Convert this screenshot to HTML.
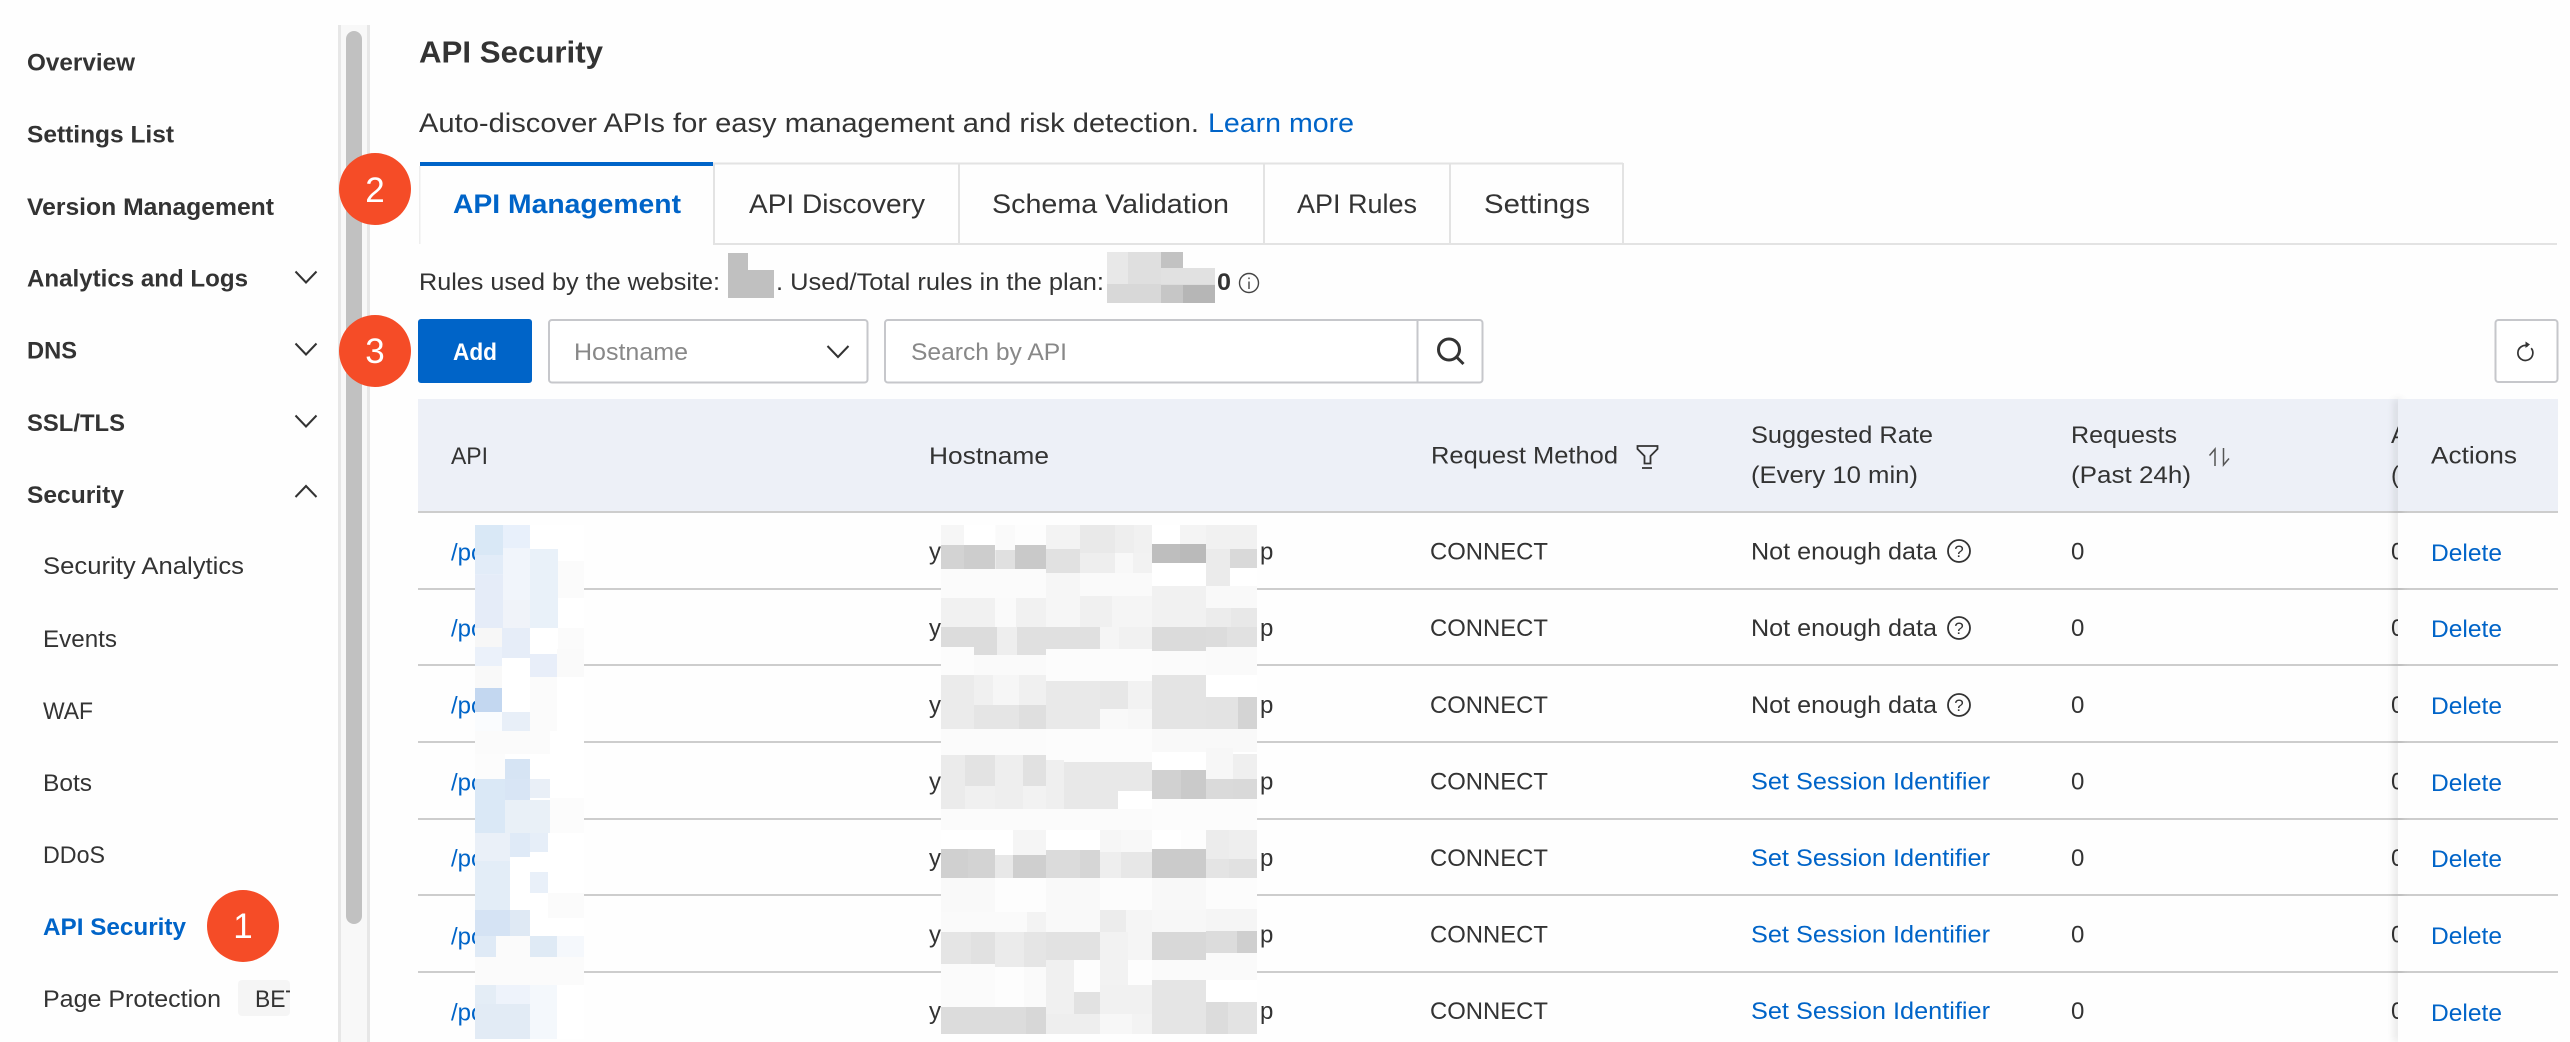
<!DOCTYPE html>
<html lang="en"><head><meta charset="utf-8"><title>API Security</title>
<style>
html,body{margin:0;padding:0;background:#fefefe;width:2570px;height:1042px;overflow:hidden}
svg{display:block}
text{font-family:"Liberation Sans",Arial,sans-serif;font-size:24px;fill:#333}
.b{font-weight:700}
.l{fill:#0064c8}
.g{fill:#888}
.t{font-size:27px}
.n{font-size:35px;fill:#fff;text-anchor:middle}
.s{fill:none;stroke:#333;stroke-width:2}
</style></head><body>
<svg xmlns="http://www.w3.org/2000/svg" width="2570" height="1042" viewBox="0 0 2570 1042">
<defs>
<clipPath id="cb"><rect x="238" y="980" width="52" height="36"/></clipPath>
<clipPath id="cc"><rect x="2380" y="390" width="18" height="652"/></clipPath>
<filter id="sh" x="-200%" y="-5%" width="500%" height="110%"><feGaussianBlur stdDeviation="4"/></filter>
</defs>
<rect width="2570" height="1042" fill="#fefefe"/>

<!-- sidebar -->
<text class="b" x="27" y="70.5" textLength="108" lengthAdjust="spacingAndGlyphs">Overview</text>
<text class="b" x="27" y="142.5" textLength="147" lengthAdjust="spacingAndGlyphs">Settings List</text>
<text class="b" x="27" y="215" textLength="247" lengthAdjust="spacingAndGlyphs">Version Management</text>
<text class="b" x="27" y="286.5" textLength="221" lengthAdjust="spacingAndGlyphs">Analytics and Logs</text>
<text class="b" x="27" y="358.5" textLength="50" lengthAdjust="spacingAndGlyphs">DNS</text>
<text class="b" x="27" y="431" textLength="98" lengthAdjust="spacingAndGlyphs">SSL/TLS</text>
<text class="b" x="27" y="503" textLength="97" lengthAdjust="spacingAndGlyphs">Security</text>
<path class="s" d="M295.5 271.5L306 282.5L316.5 271.5M295.5 343.5L306 354.5L316.5 343.5M295.5 415.5L306 426.5L316.5 415.5M295.5 497L306 486L316.5 497"/>
<text x="43" y="574" textLength="201" lengthAdjust="spacingAndGlyphs">Security Analytics</text>
<text x="43" y="647" textLength="74" lengthAdjust="spacingAndGlyphs">Events</text>
<text x="43" y="719" textLength="50" lengthAdjust="spacingAndGlyphs">WAF</text>
<text x="43" y="791" textLength="49" lengthAdjust="spacingAndGlyphs">Bots</text>
<text x="43" y="863" textLength="62" lengthAdjust="spacingAndGlyphs">DDoS</text>
<text class="b l" x="43" y="935" textLength="143" lengthAdjust="spacingAndGlyphs">API Security</text>
<text x="43" y="1007" textLength="178" lengthAdjust="spacingAndGlyphs">Page Protection</text>
<rect x="238" y="980" width="52" height="36" rx="4" fill="#f5f5f5"/>
<g clip-path="url(#cb)"><text x="255" y="1007" textLength="58" lengthAdjust="spacingAndGlyphs">BETA</text></g>

<!-- scrollbar -->
<rect x="338" y="25" width="32" height="1017" fill="#f8f8f8"/>
<rect x="338" y="25" width="3" height="1017" fill="#e7e7e7"/>
<rect x="367" y="25" width="3" height="1017" fill="#e7e7e7"/>
<rect x="346" y="31" width="16" height="893" rx="8" fill="#c1c1c1"/>

<!-- heading -->
<text class="b" style="font-size:31px" x="419" y="62.5" textLength="184" lengthAdjust="spacingAndGlyphs">API Security</text>
<text class="t" x="419" y="132" textLength="780" lengthAdjust="spacingAndGlyphs">Auto-discover APIs for easy management and risk detection.</text>
<text class="t l" x="1208" y="132" textLength="146" lengthAdjust="spacingAndGlyphs">Learn more</text>

<!-- tabs -->
<rect x="713" y="243" width="1844" height="2" fill="#e3e3e3"/>
<rect x="713" y="162.5" width="910" height="2" fill="#e3e3e3"/>
<rect x="419" y="166" width="1.5" height="78" fill="#eeeeee"/>
<rect x="713" y="163" width="2" height="82" fill="#e3e3e3"/>
<rect x="958" y="163" width="2" height="82" fill="#e3e3e3"/>
<rect x="1263" y="163" width="2" height="82" fill="#e3e3e3"/>
<rect x="1449" y="163" width="2" height="82" fill="#e3e3e3"/>
<rect x="1622" y="163" width="2" height="82" fill="#e3e3e3"/>
<rect x="420" y="162" width="293" height="4" fill="#0064c8"/>
<text class="t b l" x="453" y="213" textLength="228" lengthAdjust="spacingAndGlyphs">API Management</text>
<text class="t" x="749" y="213" textLength="176" lengthAdjust="spacingAndGlyphs">API Discovery</text>
<text class="t" x="992" y="213" textLength="237" lengthAdjust="spacingAndGlyphs">Schema Validation</text>
<text class="t" x="1297" y="213" textLength="120" lengthAdjust="spacingAndGlyphs">API Rules</text>
<text class="t" x="1484" y="213" textLength="106" lengthAdjust="spacingAndGlyphs">Settings</text>

<!-- rules line -->
<text x="419" y="290" textLength="301" lengthAdjust="spacingAndGlyphs">Rules used by the website:</text>
<path fill="#c0c0c0" d="M728 253h20v17h26v28h-46z"/>
<text x="776" y="290" textLength="328" lengthAdjust="spacingAndGlyphs">. Used/Total rules in the plan:</text>
<g>
<rect x="1107" y="268" width="108" height="35" fill="#dcdcdc"/>
<rect x="1107" y="252" width="21" height="32" fill="#e8e8e8"/>
<rect x="1128" y="252" width="33" height="32" fill="#dfdfdf"/>
<rect x="1161" y="252" width="22" height="16" fill="#c2c2c2"/>
<rect x="1183" y="252" width="32" height="16" fill="#fefefe"/>
<rect x="1161" y="268" width="54" height="16" fill="#e1e1e1"/>
<rect x="1161" y="285" width="22" height="18" fill="#c6c6c6"/>
<rect x="1183" y="285" width="32" height="18" fill="#b6b6b6"/>
<rect x="1107" y="284" width="54" height="19" fill="#d8d8d8"/>
</g>
<text class="b" x="1217" y="290" textLength="14" lengthAdjust="spacingAndGlyphs">0</text>
<circle cx="1249" cy="283" r="9.5" fill="none" stroke="#444" stroke-width="1.4"/>
<path d="M1249 281.5v7.5M1249 277.5v1.6" stroke="#444" stroke-width="1.4" fill="none"/>

<!-- toolbar -->
<rect x="418" y="319" width="114" height="64" rx="3" fill="#0064c8"/>
<text class="b" style="fill:#fff" x="453" y="360" textLength="44" lengthAdjust="spacingAndGlyphs">Add</text>
<rect x="549" y="320" width="318.5" height="62.5" rx="3" fill="#fff" stroke="#c6c7cb" stroke-width="2"/>
<text class="g" x="574" y="360" textLength="114" lengthAdjust="spacingAndGlyphs">Hostname</text>
<path class="s" d="M827.5 346L838 357L848.5 346"/>
<rect x="885" y="320" width="597.5" height="62.5" rx="3" fill="#fff" stroke="#c6c7cb" stroke-width="2"/>
<rect x="1416.5" y="320" width="2" height="62" fill="#c6c7cb"/>
<text class="g" x="911" y="360" textLength="156" lengthAdjust="spacingAndGlyphs">Search by API</text>
<circle cx="1449" cy="349.5" r="10.5" fill="none" stroke="#333" stroke-width="3"/>
<path d="M1456.5 357L1463.5 364" stroke="#333" stroke-width="3" fill="none"/>
<rect x="2495.5" y="320" width="62" height="62" rx="3" fill="#fff" stroke="#c6c7cb" stroke-width="2"/>
<path d="M2528 345.9A7.5 7.5 0 1 0 2531.2 348.2" fill="none" stroke="#333" stroke-width="1.7"/>
<path d="M2525.5 341.5L2530 344.5L2525.5 348Z" fill="#333"/>

<!-- table header -->
<rect x="418" y="399" width="2140" height="113" fill="#edf0f7"/>
<text x="451" y="464" textLength="37" lengthAdjust="spacingAndGlyphs">API</text>
<text x="929" y="464" textLength="120" lengthAdjust="spacingAndGlyphs">Hostname</text>
<text x="1431" y="463.5" textLength="187" lengthAdjust="spacingAndGlyphs">Request Method</text>
<path d="M1637.5 446H1657.5V449L1650.5 456V463.5H1644.5V456L1637.5 449ZM1642 468H1652" fill="none" stroke="#333" stroke-width="1.8"/>
<text x="1751" y="443" textLength="182" lengthAdjust="spacingAndGlyphs">Suggested Rate</text>
<text x="1751" y="483" textLength="167" lengthAdjust="spacingAndGlyphs">(Every 10 min)</text>
<text x="2071" y="443" textLength="106" lengthAdjust="spacingAndGlyphs">Requests</text>
<text x="2071" y="483" textLength="120" lengthAdjust="spacingAndGlyphs">(Past 24h)</text>
<path d="M2215 466V449L2209.5 455.5M2223.5 448V465L2229 458.5" fill="none" stroke="#555" stroke-width="1.5"/>

<!-- row lines -->
<g fill="#cdcdcd">
<rect x="418" y="511" width="2140" height="2"/>
<rect x="418" y="588" width="2140" height="2"/>
<rect x="418" y="664" width="2140" height="2"/>
<rect x="418" y="741" width="2140" height="2"/>
<rect x="418" y="818" width="2140" height="2"/>
<rect x="418" y="894" width="2140" height="2"/>
<rect x="418" y="971" width="2140" height="2"/>
</g>

<!-- rows: API -->
<text class="l" x="451" y="560.5">/po</text>
<text class="l" x="451" y="636.5">/po</text>
<text class="l" x="451" y="713.5">/po</text>
<text class="l" x="451" y="790.5">/po</text>
<text class="l" x="451" y="866.5">/po</text>
<text class="l" x="451" y="944.5">/po</text>
<text class="l" x="451" y="1020.5">/po</text>
<!-- rows: hostname -->
<text x="929" y="559.5">y</text><text x="1260" y="559.5">p</text>
<text x="929" y="636">y</text><text x="1260" y="636">p</text>
<text x="929" y="713">y</text><text x="1260" y="713">p</text>
<text x="929" y="789.5">y</text><text x="1260" y="789.5">p</text>
<text x="929" y="866">y</text><text x="1260" y="866">p</text>
<text x="929" y="942.5">y</text><text x="1260" y="942.5">p</text>
<text x="929" y="1019">y</text><text x="1260" y="1019">p</text>

<!-- API mosaic -->
<g transform="translate(470 520) scale(.33333)">
<rect x="15" y="15" width="327" height="1542" fill="#fff"/>
<rect x="15" y="15" width="84" height="90" fill="#d9e8f6"/>
<rect x="99" y="15" width="81" height="70" fill="#e8f0fb"/>
<rect x="15" y="105" width="84" height="58" fill="#e2ecf8"/>
<rect x="99" y="85" width="81" height="155" fill="#f1f5fb"/>
<rect x="180" y="87" width="84" height="237" fill="#e9f1f9"/>
<rect x="264" y="123" width="78" height="111" fill="#fbfbfb"/>
<rect x="15" y="163" width="84" height="161" fill="#e5ecf8"/>
<rect x="99" y="240" width="81" height="84" fill="#f0f3f9"/>
<rect x="15" y="324" width="81" height="57" fill="#f7f7f7"/>
<rect x="96" y="324" width="84" height="90" fill="#e6edf8"/>
<rect x="264" y="324" width="78" height="63" fill="#fbfbfb"/>
<rect x="15" y="381" width="81" height="57" fill="#ebf1fa"/>
<rect x="180" y="402" width="81" height="69" fill="#e8eef9"/>
<rect x="261" y="387" width="81" height="84" fill="#fafafa"/>
<rect x="15" y="438" width="81" height="66" fill="#f9f9f9"/>
<rect x="15" y="504" width="81" height="72" fill="#c3d7f0"/>
<rect x="180" y="471" width="81" height="162" fill="#fbfbfb"/>
<rect x="15" y="576" width="81" height="57" fill="#fafcfe"/>
<rect x="96" y="576" width="84" height="57" fill="#e8eff8"/>
<rect x="15" y="633" width="225" height="69" fill="#fbfbfb"/>
<rect x="15" y="702" width="90" height="75" fill="#fcfcfc"/>
<rect x="105" y="717" width="75" height="60" fill="#d6e4f4"/>
<rect x="15" y="777" width="90" height="162" fill="#dae8f6"/>
<rect x="105" y="777" width="75" height="63" fill="#d8e5f5"/>
<rect x="180" y="777" width="60" height="57" fill="#e9eff7"/>
<rect x="105" y="840" width="135" height="99" fill="#e9f0f7"/>
<rect x="240" y="834" width="102" height="105" fill="#fcfcfc"/>
<rect x="15" y="939" width="105" height="84" fill="#eaf0f8"/>
<rect x="120" y="939" width="60" height="72" fill="#dfeaf7"/>
<rect x="180" y="939" width="54" height="57" fill="#e6eef8"/>
<rect x="15" y="1023" width="105" height="147" fill="#e3edf7"/>
<rect x="180" y="1056" width="54" height="63" fill="#e9f0f9"/>
<rect x="234" y="1119" width="108" height="75" fill="#fbfbfb"/>
<rect x="15" y="1170" width="105" height="78" fill="#d5e3f4"/>
<rect x="120" y="1170" width="60" height="78" fill="#dfe9f4"/>
<rect x="15" y="1248" width="63" height="63" fill="#dfeaf6"/>
<rect x="78" y="1248" width="102" height="63" fill="#fbfbfb"/>
<rect x="180" y="1248" width="81" height="63" fill="#dfeaf5"/>
<rect x="261" y="1248" width="81" height="75" fill="#f5f8fc"/>
<rect x="15" y="1311" width="327" height="84" fill="#fbfbfb"/>
<rect x="15" y="1395" width="63" height="57" fill="#e4edf6"/>
<rect x="78" y="1395" width="102" height="57" fill="#eef3fb"/>
<rect x="180" y="1395" width="81" height="162" fill="#f4f8fc"/>
<rect x="15" y="1452" width="165" height="105" fill="#e2ebf5"/>
</g>

<!-- Hostname mosaic -->
<g transform="translate(935 520) scale(.33333)">
<rect x="18" y="15" width="948" height="1527" fill="#fff"/>
<rect x="18" y="15" width="69" height="60" fill="#f6f6f6"/>
<rect x="181" y="15" width="59" height="75" fill="#fafafa"/>
<rect x="240" y="15" width="93" height="60" fill="#fdfdfd"/>
<rect x="333" y="15" width="102" height="72" fill="#f3f3f3"/>
<rect x="435" y="15" width="105" height="84" fill="#e9e9e9"/>
<rect x="540" y="15" width="57" height="84" fill="#eeeeee"/>
<rect x="597" y="15" width="54" height="84" fill="#f1f1f1"/>
<rect x="735" y="15" width="78" height="57" fill="#f4f4f4"/>
<rect x="813" y="15" width="72" height="72" fill="#f1f1f1"/>
<rect x="885" y="15" width="81" height="72" fill="#f1f1f1"/>
<rect x="18" y="75" width="69" height="72" fill="#d3d3d3"/>
<rect x="87" y="75" width="93" height="72" fill="#cdcdcd"/>
<rect x="181" y="90" width="59" height="57" fill="#e0e0e0"/>
<rect x="240" y="75" width="93" height="72" fill="#c9c9c9"/>
<rect x="333" y="87" width="102" height="72" fill="#e1e1e1"/>
<rect x="435" y="99" width="105" height="60" fill="#eeeeee"/>
<rect x="540" y="99" width="54" height="60" fill="#f8f8f8"/>
<rect x="594" y="99" width="57" height="60" fill="#f2f2f2"/>
<rect x="651" y="72" width="84" height="57" fill="#bebebe"/>
<rect x="735" y="72" width="78" height="57" fill="#bababa"/>
<rect x="813" y="87" width="72" height="111" fill="#ebebeb"/>
<rect x="885" y="87" width="81" height="57" fill="#d9d9d9"/>
<rect x="18" y="147" width="315" height="87" fill="#fbfbfb"/>
<rect x="333" y="159" width="102" height="75" fill="#f6f6f6"/>
<rect x="435" y="159" width="216" height="69" fill="#fafafa"/>
<rect x="651" y="198" width="162" height="123" fill="#f1f1f1"/>
<rect x="813" y="198" width="153" height="66" fill="#f9f9f9"/>
<rect x="18" y="234" width="162" height="87" fill="#f1f1f1"/>
<rect x="180" y="234" width="63" height="87" fill="#fafafa"/>
<rect x="243" y="234" width="90" height="87" fill="#f1f1f1"/>
<rect x="333" y="234" width="102" height="87" fill="#f6f6f6"/>
<rect x="435" y="228" width="96" height="93" fill="#f0f0f0"/>
<rect x="531" y="228" width="120" height="93" fill="#f5f5f5"/>
<rect x="813" y="264" width="75" height="57" fill="#ececec"/>
<rect x="888" y="264" width="78" height="57" fill="#e8e8e8"/>
<rect x="18" y="321" width="168" height="60" fill="#dcdcdc"/>
<rect x="117" y="381" width="69" height="24" fill="#dcdcdc"/>
<rect x="186" y="321" width="60" height="84" fill="#eeeeee"/>
<rect x="246" y="321" width="249" height="66" fill="#e0e0e0"/>
<rect x="246" y="387" width="87" height="18" fill="#e0e0e0"/>
<rect x="495" y="321" width="57" height="72" fill="#f5f5f5"/>
<rect x="552" y="321" width="99" height="72" fill="#f1f1f1"/>
<rect x="651" y="321" width="162" height="72" fill="#dbdbdb"/>
<rect x="813" y="321" width="63" height="60" fill="#dcdcdc"/>
<rect x="876" y="321" width="90" height="60" fill="#e1e1e1"/>
<rect x="18" y="381" width="99" height="84" fill="#fcfcfc"/>
<rect x="117" y="405" width="216" height="60" fill="#fafafa"/>
<rect x="333" y="387" width="318" height="96" fill="#fcfcfc"/>
<rect x="651" y="393" width="162" height="72" fill="#fbfbfb"/>
<rect x="813" y="381" width="153" height="84" fill="#fafafa"/>
<rect x="18" y="465" width="99" height="162" fill="#ebebeb"/>
<rect x="117" y="465" width="57" height="90" fill="#f0f0f0"/>
<rect x="174" y="465" width="78" height="90" fill="#f6f6f6"/>
<rect x="252" y="465" width="81" height="90" fill="#f0f0f0"/>
<rect x="117" y="555" width="135" height="72" fill="#e5e5e5"/>
<rect x="252" y="555" width="81" height="72" fill="#dfdfdf"/>
<rect x="333" y="483" width="162" height="144" fill="#e9e9e9"/>
<rect x="495" y="483" width="84" height="84" fill="#e7e7e7"/>
<rect x="579" y="483" width="72" height="84" fill="#f2f2f2"/>
<rect x="495" y="567" width="84" height="60" fill="#f9f9f9"/>
<rect x="579" y="567" width="72" height="60" fill="#f7f7f7"/>
<rect x="651" y="465" width="162" height="162" fill="#e4e4e4"/>
<rect x="813" y="531" width="96" height="96" fill="#e3e3e3"/>
<rect x="909" y="531" width="57" height="96" fill="#d4d4d4"/>
<rect x="18" y="627" width="315" height="78" fill="#fbfbfb"/>
<rect x="333" y="627" width="318" height="99" fill="#fcfcfc"/>
<rect x="651" y="627" width="315" height="69" fill="#f9f9f9"/>
<rect x="813" y="684" width="81" height="93" fill="#f7f7f7"/>
<rect x="894" y="702" width="72" height="75" fill="#efefef"/>
<rect x="18" y="705" width="72" height="162" fill="#ebebeb"/>
<rect x="90" y="705" width="90" height="93" fill="#e3e3e3"/>
<rect x="90" y="798" width="90" height="69" fill="#f0f0f0"/>
<rect x="180" y="705" width="84" height="162" fill="#eeeeee"/>
<rect x="264" y="705" width="69" height="93" fill="#e1e1e1"/>
<rect x="264" y="798" width="69" height="69" fill="#f2f2f2"/>
<rect x="333" y="720" width="54" height="147" fill="#efefef"/>
<rect x="387" y="726" width="162" height="141" fill="#e8e8e8"/>
<rect x="549" y="726" width="102" height="87" fill="#e8e8e8"/>
<rect x="651" y="750" width="87" height="87" fill="#d1d1d1"/>
<rect x="738" y="750" width="75" height="87" fill="#cacaca"/>
<rect x="813" y="777" width="81" height="60" fill="#dadada"/>
<rect x="894" y="777" width="72" height="60" fill="#d9d9d9"/>
<rect x="18" y="867" width="633" height="63" fill="#fbfbfb"/>
<rect x="651" y="837" width="315" height="93" fill="#fcfcfc"/>
<rect x="234" y="930" width="99" height="75" fill="#f5f5f5"/>
<rect x="495" y="930" width="63" height="66" fill="#f6f6f6"/>
<rect x="558" y="930" width="93" height="66" fill="#f8f8f8"/>
<rect x="738" y="930" width="75" height="57" fill="#fdfdfd"/>
<rect x="813" y="930" width="69" height="87" fill="#ececec"/>
<rect x="882" y="930" width="84" height="87" fill="#eeeeee"/>
<rect x="18" y="987" width="81" height="87" fill="#d0d0d0"/>
<rect x="99" y="987" width="81" height="87" fill="#d3d3d3"/>
<rect x="180" y="1005" width="54" height="69" fill="#e8e8e8"/>
<rect x="234" y="1005" width="99" height="69" fill="#cfcfcf"/>
<rect x="333" y="990" width="102" height="84" fill="#dbdbdb"/>
<rect x="435" y="990" width="60" height="84" fill="#d6d6d6"/>
<rect x="495" y="996" width="63" height="78" fill="#eeeeee"/>
<rect x="558" y="996" width="93" height="78" fill="#e7e7e7"/>
<rect x="651" y="987" width="87" height="87" fill="#cbcbcb"/>
<rect x="738" y="987" width="75" height="87" fill="#cbcbcb"/>
<rect x="813" y="1017" width="69" height="57" fill="#e4e4e4"/>
<rect x="882" y="1017" width="84" height="57" fill="#e1e1e1"/>
<rect x="18" y="1074" width="162" height="102" fill="#f9f9f9"/>
<rect x="180" y="1074" width="153" height="102" fill="#fdfdfd"/>
<rect x="333" y="1074" width="162" height="102" fill="#f9f9f9"/>
<rect x="495" y="1074" width="156" height="96" fill="#fcfcfc"/>
<rect x="651" y="1074" width="162" height="96" fill="#f8f8f8"/>
<rect x="813" y="1074" width="153" height="93" fill="#fcfcfc"/>
<rect x="18" y="1176" width="258" height="60" fill="#fafafa"/>
<rect x="276" y="1176" width="57" height="60" fill="#f3f3f3"/>
<rect x="333" y="1176" width="162" height="60" fill="#f9f9f9"/>
<rect x="495" y="1170" width="78" height="66" fill="#ececec"/>
<rect x="573" y="1170" width="78" height="66" fill="#f5f5f5"/>
<rect x="651" y="1170" width="162" height="66" fill="#f7f7f7"/>
<rect x="813" y="1167" width="153" height="66" fill="#f5f5f5"/>
<rect x="18" y="1236" width="90" height="96" fill="#e5e5e5"/>
<rect x="108" y="1236" width="72" height="96" fill="#e1e1e1"/>
<rect x="180" y="1236" width="87" height="105" fill="#ebebeb"/>
<rect x="267" y="1236" width="66" height="105" fill="#e5e5e5"/>
<rect x="333" y="1236" width="162" height="84" fill="#e2e2e2"/>
<rect x="495" y="1236" width="84" height="159" fill="#f2f2f2"/>
<rect x="579" y="1236" width="72" height="84" fill="#f5f5f5"/>
<rect x="651" y="1236" width="162" height="84" fill="#d8d8d8"/>
<rect x="813" y="1233" width="93" height="66" fill="#dcdcdc"/>
<rect x="906" y="1233" width="60" height="66" fill="#cfcfcf"/>
<rect x="651" y="1320" width="162" height="60" fill="#fafafa"/>
<rect x="813" y="1299" width="153" height="81" fill="#fafafa"/>
<rect x="18" y="1332" width="162" height="129" fill="#fbfbfb"/>
<rect x="180" y="1341" width="87" height="120" fill="#fdfdfd"/>
<rect x="267" y="1341" width="66" height="120" fill="#fafafa"/>
<rect x="333" y="1320" width="84" height="162" fill="#f0f0f0"/>
<rect x="417" y="1320" width="78" height="96" fill="#fdfdfd"/>
<rect x="417" y="1416" width="78" height="66" fill="#e2e2e2"/>
<rect x="579" y="1320" width="72" height="75" fill="#fdfdfd"/>
<rect x="495" y="1395" width="156" height="87" fill="#f1f1f1"/>
<rect x="651" y="1380" width="162" height="162" fill="#e5e5e5"/>
<rect x="813" y="1446" width="66" height="96" fill="#dcdcdc"/>
<rect x="879" y="1446" width="87" height="96" fill="#e3e3e3"/>
<rect x="18" y="1461" width="255" height="81" fill="#dcdcdc"/>
<rect x="273" y="1461" width="60" height="81" fill="#d7d7d7"/>
<rect x="333" y="1482" width="162" height="60" fill="#eeeeee"/>
<rect x="495" y="1482" width="96" height="60" fill="#f7f7f7"/>
<rect x="591" y="1482" width="60" height="60" fill="#f3f3f3"/>
</g>

<!-- method -->
<text x="1430" y="559.5" textLength="118" lengthAdjust="spacingAndGlyphs">CONNECT</text>
<text x="1430" y="636" textLength="118" lengthAdjust="spacingAndGlyphs">CONNECT</text>
<text x="1430" y="713" textLength="118" lengthAdjust="spacingAndGlyphs">CONNECT</text>
<text x="1430" y="789.5" textLength="118" lengthAdjust="spacingAndGlyphs">CONNECT</text>
<text x="1430" y="866" textLength="118" lengthAdjust="spacingAndGlyphs">CONNECT</text>
<text x="1430" y="942.5" textLength="118" lengthAdjust="spacingAndGlyphs">CONNECT</text>
<text x="1430" y="1019" textLength="118" lengthAdjust="spacingAndGlyphs">CONNECT</text>

<!-- suggested rate -->
<text x="1751" y="559.5" textLength="186" lengthAdjust="spacingAndGlyphs">Not enough data</text>
<text x="1751" y="636" textLength="186" lengthAdjust="spacingAndGlyphs">Not enough data</text>
<text x="1751" y="713" textLength="186" lengthAdjust="spacingAndGlyphs">Not enough data</text>
<g fill="none" stroke="#333" stroke-width="1.8">
<circle cx="1959" cy="551" r="11"/><circle cx="1959" cy="628" r="11"/><circle cx="1959" cy="705" r="11"/>
</g>
<text style="font-size:17px" x="1954.3" y="557">?</text>
<text style="font-size:17px" x="1954.3" y="634">?</text>
<text style="font-size:17px" x="1954.3" y="711">?</text>
<text class="l" x="1751" y="789.5" textLength="239" lengthAdjust="spacingAndGlyphs">Set Session Identifier</text>
<text class="l" x="1751" y="866" textLength="239" lengthAdjust="spacingAndGlyphs">Set Session Identifier</text>
<text class="l" x="1751" y="942.5" textLength="239" lengthAdjust="spacingAndGlyphs">Set Session Identifier</text>
<text class="l" x="1751" y="1019" textLength="239" lengthAdjust="spacingAndGlyphs">Set Session Identifier</text>

<!-- requests -->
<text x="2071" y="559.5">0</text>
<text x="2071" y="636">0</text>
<text x="2071" y="713">0</text>
<text x="2071" y="789.5">0</text>
<text x="2071" y="866">0</text>
<text x="2071" y="942.5">0</text>
<text x="2071" y="1019">0</text>

<!-- clipped column -->
<g clip-path="url(#cc)">
<text x="2391" y="443">A</text>
<text x="2391" y="483">(</text>
<text x="2391" y="559.5">0</text>
<text x="2391" y="636">0</text>
<text x="2391" y="713">0</text>
<text x="2391" y="789.5">0</text>
<text x="2391" y="866">0</text>
<text x="2391" y="942.5">0</text>
<text x="2391" y="1019">0</text>
</g>

<!-- fixed actions column -->
<rect x="2394" y="399" width="8" height="643" fill="#000" opacity=".09" filter="url(#sh)"/>
<rect x="2398" y="399" width="160" height="112" fill="#edf0f7"/>
<rect x="2398" y="513" width="160" height="75" fill="#fefefe"/>
<rect x="2398" y="590" width="160" height="74" fill="#fefefe"/>
<rect x="2398" y="666" width="160" height="75" fill="#fefefe"/>
<rect x="2398" y="743" width="160" height="75" fill="#fefefe"/>
<rect x="2398" y="820" width="160" height="74" fill="#fefefe"/>
<rect x="2398" y="896" width="160" height="75" fill="#fefefe"/>
<rect x="2398" y="973" width="160" height="69" fill="#fefefe"/>
<rect x="2558" y="390" width="12" height="652" fill="#fefefe"/>
<text x="2431" y="463.5" textLength="86" lengthAdjust="spacingAndGlyphs">Actions</text>
<text class="l" x="2431" y="561" textLength="71" lengthAdjust="spacingAndGlyphs">Delete</text>
<text class="l" x="2431" y="637" textLength="71" lengthAdjust="spacingAndGlyphs">Delete</text>
<text class="l" x="2431" y="714" textLength="71" lengthAdjust="spacingAndGlyphs">Delete</text>
<text class="l" x="2431" y="791" textLength="71" lengthAdjust="spacingAndGlyphs">Delete</text>
<text class="l" x="2431" y="867" textLength="71" lengthAdjust="spacingAndGlyphs">Delete</text>
<text class="l" x="2431" y="944" textLength="71" lengthAdjust="spacingAndGlyphs">Delete</text>
<text class="l" x="2431" y="1021" textLength="71" lengthAdjust="spacingAndGlyphs">Delete</text>

<!-- callouts -->
<circle cx="243" cy="926" r="36" fill="#f54c27"/>
<circle cx="375" cy="189" r="36" fill="#f54c27"/>
<circle cx="375" cy="351" r="36" fill="#f54c27"/>
<text class="n" x="243" y="938">1</text>
<text class="n" x="375" y="202">2</text>
<text class="n" x="375" y="363">3</text>
</svg>
</body></html>
